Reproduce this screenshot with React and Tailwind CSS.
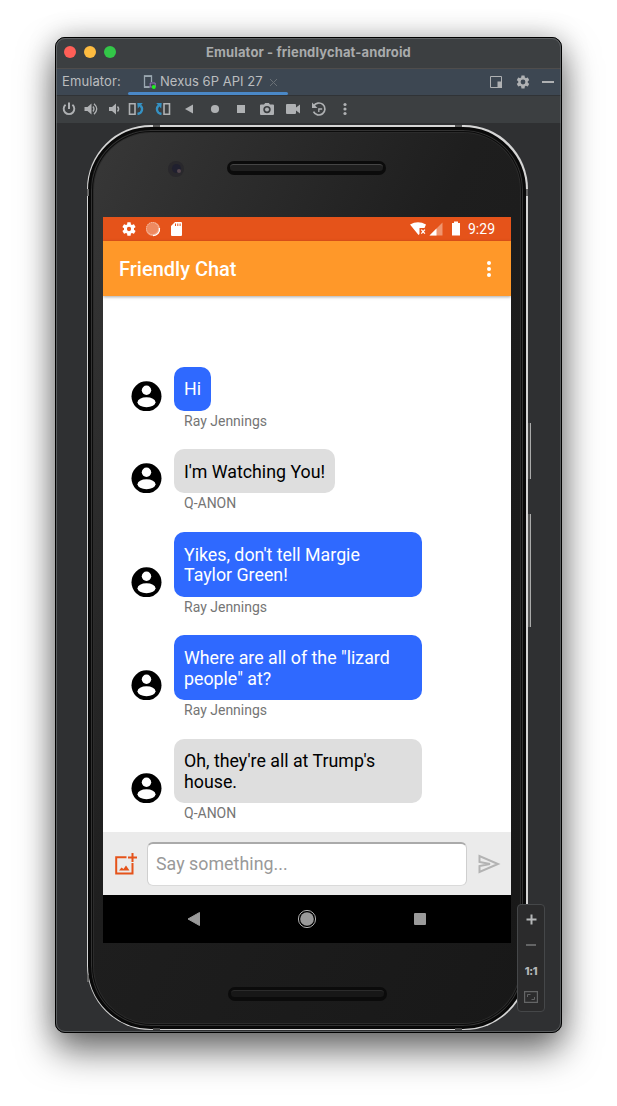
import React from 'react';

const ICON = '#afb1b3';

function Tool({ wide, className = '', children }) {
  return (
    <button className={`flex h-[26px] shrink-0 items-center justify-center ${wide ? 'w-[26px]' : 'w-[22.5px]'} ${className}`}>
      <svg width="16" height="16" viewBox="0 0 16 16" fill={ICON}>{children}</svg>
    </button>
  );
}

function TitleBar() {
  return (
    <div className="relative flex h-[30px] shrink-0 items-center justify-center bg-[#3c3f41] pb-[3px]">
      <div className="absolute left-[8px] top-[8px] flex gap-[8px]">
        <span className="size-[12px] rounded-full bg-[#ff5f57]" />
        <span className="size-[12px] rounded-full bg-[#febc40]" />
        <span className="size-[12px] rounded-full bg-[#33c748]" />
      </div>
      <span className="font-['Inter',sans-serif] text-[13px] leading-[16px] font-bold tracking-[0.13px] whitespace-nowrap text-[#a9abac]">
        Emulator - friendlychat-android
      </span>
    </div>
  );
}

function TabBar() {
  return (
    <div className="flex h-[28px] shrink-0 border-y border-t-[#4f4d4c] border-b-[#303336] bg-[#3d4752] font-['Inter',sans-serif] text-[13px] text-[#bbbdbf]">
      <span className="flex w-[72px] items-center pl-[6px] tracking-[0.1px]">Emulator:</span>
      <div className="relative flex w-[160px] items-center">
        <svg className="ml-[14px] shrink-0" width="16" height="16" viewBox="0 0 16 16" fill="none">
          <path d="M7.500 13H2.500V2h7v6" stroke="#9aa7b0" strokeWidth="1.300" />
          <path d="M2 12.200h5.500v1.800H2zM2 1.500h8V3H2z" fill="#9aa7b0" />
          <path d="M8.200 9h5v4h-5z" stroke="#9a6fc0" />
          <circle cx="11.800" cy="13" r="2" fill="#1ef21e" />
        </svg>
        <span className="ml-[2px] tracking-[0.03px] whitespace-nowrap">Nexus 6P API 27</span>
        <svg className="ml-[6px]" width="9" height="9" viewBox="0 0 9 9">
          <path d="M1 1l7 7M8 1L1 8" stroke="#6a7076" strokeWidth="1" />
        </svg>
        <div className="absolute bottom-0 left-0 h-[3px] w-[160px] rounded-full bg-[#4a88c7]" />
      </div>
      <div className="ml-auto flex items-center pr-[4px]">
        <svg className="mr-[12px]" width="14" height="14" viewBox="0 0 14 14">
          <path d="M1.500 1.500h11v11h-11z" fill="none" stroke={ICON} />
          <path d="M8.500 6.500H13V13H8.500z" fill={ICON} />
        </svg>
        <svg className="mr-[11px]" width="16" height="16" viewBox="0 0 24 24" fill={ICON}>
          <path d="M19.140 12.940c.04-.3.060-.61.060-.94s-.02-.64-.07-.94l2.030-1.580c.18-.14.230-.41.120-.61l-1.920-3.320c-.12-.22-.37-.29-.59-.22l-2.390.96c-.5-.38-1.030-.7-1.620-.94l-.36-2.540c-.04-.24-.24-.41-.48-.41h-3.840c-.24 0-.43.170-.47.410l-.36 2.540c-.59.240-1.130.570-1.620.940l-2.390-.96c-.22-.08-.47 0-.59.220L2.740 8.870c-.12.210-.08.470.120.610l2.030 1.580c-.05.3-.09.630-.09.940s.020.640.070.940l-2.030 1.580c-.18.140-.23.410-.12.610l1.920 3.320c.12.220.37.290.59.220l2.390-.96c.5.380 1.030.7 1.620.940l.36 2.540c.05.240.24.410.48.410h3.840c.24 0 .44-.17.470-.41l.36-2.540c.59-.24 1.130-.56 1.620-.94l2.390.960c.22.080.47 0 .59-.22l1.920-3.320c.12-.22.070-.47-.12-.61l-2.010-1.580zM12 15.600a3.600 3.600 0 110-7.200 3.600 3.600 0 010 7.200z" />
        </svg>
        <span className="mr-[3px] h-[2px] w-[12px] bg-[#afb1b3]" />
      </div>
    </div>
  );
}

function ToolBar() {
  return (
    <div className="flex h-[27px] shrink-0 bg-[#3c3f41] pl-[1.500px]">
      <Tool>
        <path d="M4.600 3.800A5.300 5.300 0 1011.400 3.800" fill="none" stroke={ICON} strokeWidth="1.900" />
        <path d="M7 1.500h2V8H7z" />
      </Tool>
      <Tool>
        <path d="M1.500 6h3L8.500 2.500v11L4.500 10h-3z" />
        <path d="M10 5.500Q12 8 10 10.500M11 2.800Q16.500 8 11 13.200" fill="none" stroke={ICON} strokeWidth="1.300" />
      </Tool>
      <Tool>
        <path d="M3 6h3l4-3.500v11L6 10H3z" />
        <path d="M11.500 5.500Q13.800 8 11.500 10.500" fill="none" stroke={ICON} strokeWidth="1.400" />
      </Tool>
      <Tool>
        <path d="M1.500 2.700h5.500v10.600h-5.500z" fill="none" stroke={ICON} strokeWidth="1.600" />
        <path d="M9.500 13C15 12 15 6.500 12.200 4.500" fill="none" stroke="#3592c4" strokeWidth="2.300" />
        <path d="M9.300 2h5.500L9.800 7.500z" fill="#3592c4" />
      </Tool>
      <Tool wide className="ml-[2px]">
        <path d="M9 2.700h5.500v10.600H9z" fill="none" stroke={ICON} strokeWidth="1.600" />
        <path d="M6.500 13C1 12 1 6.500 3.800 4.500" fill="none" stroke="#3592c4" strokeWidth="2.300" />
        <path d="M6.700 2H1.200L6.200 7.500z" fill="#3592c4" />
      </Tool>
      <Tool wide><path d="M4 8l8-4.500v9z" /></Tool>
      <Tool wide><circle cx="8" cy="8" r="4.100" /></Tool>
      <Tool wide><path d="M4 4h8v8H4z" /></Tool>
      <Tool wide>
        <path fillRule="evenodd" d="M2 3.500h3L6.200 2h3.600L11 3.500h3q1 0 1 1V13q0 1-1 1H2q-1 0-1-1V4.500q0-1 1-1zM8 4.900a3.700 3.700 0 100 7.400 3.700 3.700 0 000-7.400z" />
        <circle cx="8" cy="8.600" r="2" />
      </Tool>
      <Tool wide><path d="M1 4q0-1 1-1h8q1 0 1 1v2.500L15 3.500v9L11 9.500V12q0 1-1 1H2q-1 0-1-1z" /></Tool>
      <Tool wide>
        <path d="M2.700 5A6 6 0 112.500 10.600" fill="none" stroke={ICON} strokeWidth="1.700" />
        <path d="M1 1.500V7h5.500z" />
        <path d="M7.800 11V8h3.400" fill="none" stroke={ICON} strokeWidth="1.300" />
      </Tool>
      <Tool wide>
        <circle cx="8" cy="3.500" r="1.600" /><circle cx="8" cy="8" r="1.600" /><circle cx="8" cy="12.500" r="1.600" />
      </Tool>
    </div>
  );
}

function StatusBar() {
  return (
    <div className="flex h-[24px] items-center bg-[#e5531a] pr-[16px] pl-[18px]">
      <svg width="16" height="16" viewBox="0 0 24 24" fill="#fff">
        <path fillRule="evenodd" d="M19.430 12.980c.04-.32.070-.64.070-.98s-.03-.66-.07-.98l2.110-1.650c.19-.15.240-.42.120-.64l-2-3.460c-.12-.22-.39-.3-.61-.22l-2.490 1c-.52-.4-1.080-.73-1.690-.98l-.38-2.650A.488.488 0 0014 2h-4c-.25 0-.46.180-.49.420l-.38 2.650c-.61.250-1.170.590-1.690.980l-2.490-1c-.23-.09-.49 0-.61.220l-2 3.460c-.13.220-.07.490.12.640l2.110 1.650c-.04.320-.07.650-.07.980s.030.660.070.980l-2.110 1.650c-.19.150-.24.420-.12.640l2 3.460c.12.220.39.300.61.220l2.490-1c.52.400 1.080.730 1.690.980l.38 2.650c.03.240.24.420.49.420h4c.25 0 .46-.18.490-.42l.38-2.650c.61-.25 1.170-.59 1.690-.98l2.490 1c.23.090.49 0 .61-.22l2-3.460c.12-.22.070-.49-.12-.64l-2.110-1.650zM12 15.200a3.200 3.200 0 110-6.400 3.200 3.200 0 010 6.400z" />
      </svg>
      <svg className="ml-[8px]" width="16" height="16" viewBox="0 0 16 16">
        <circle cx="8" cy="8" r="7" fill="#f3a483" />
        <circle cx="7.500" cy="7.500" r="6" fill="#ee8a60" stroke="#f7c0a8" strokeWidth="1" strokeDasharray="1 1" />
        <path d="M14.500 7A6.500 6.500 0 018 14.600" fill="none" stroke="#fff" strokeWidth="1.200" />
      </svg>
      <svg className="ml-[9px]" width="13" height="16" viewBox="0 0 13 16">
        <path fill="#fff" fillRule="evenodd" d="M5 1h6q1 0 1 1v12q0 1-1 1H2q-1 0-1-1V5zM5 2.500V5h1V2.500zM7.300 2.500V5h1V2.500zM9.600 2.500V5h1V2.500z" />
      </svg>
      <svg className="ml-auto" width="35" height="16" viewBox="0 0 35 16">
        <path d="M1 3.500Q9 -1 17 3.500L15.500 7H10.500v6L9.500 14z" fill="#fff" />
        <path d="M12.300 8.600l3.600 4M15.900 8.600l-3.600 4" stroke="#fff" strokeWidth="1.300" />
        <path d="M33.500 1.500v13h-13z" fill="#f0956f" />
        <path d="M27.500 7.500v7h-7z" fill="#fff" />
      </svg>
      <svg className="ml-[7px]" width="10" height="16" viewBox="0 0 10 16">
        <path d="M3 .5h4V2h2v12.500H1V2h2z" fill="#fff" />
      </svg>
      <span className="ml-[7px] w-[27px] text-[14px] leading-[24px] text-white">9:29</span>
    </div>
  );
}

function AppBar() {
  return (
    <div className="relative flex h-[55px] items-center justify-between bg-[#ff9829] pr-[19px] pl-[16px] shadow-[0_1px_3px_rgba(0,0,0,0.35)]">
      <h1 className="text-[20px] font-medium text-white">Friendly Chat</h1>
      <svg width="6" height="18" viewBox="0 0 6 18" fill="#fff">
        <circle cx="3" cy="3" r="2" /><circle cx="3" cy="9" r="2" /><circle cx="3" cy="15" r="2" />
      </svg>
    </div>
  );
}

const messages = [
  { lines: ['Hi'], name: 'Ray Jennings', own: true },
  { lines: ["I'm Watching You!"], name: 'Q-ANON' },
  { lines: ["Yikes, don't tell Margie", 'Taylor Green!'], name: 'Ray Jennings', own: true },
  { lines: ['Where are all of the "lizard', 'people" at?'], name: 'Ray Jennings', own: true },
  { lines: ["Oh, they're all at Trump's", 'house.'], name: 'Q-ANON' },
];

function Message({ lines, name, own }) {
  return (
    <li>
      <div className="flex items-end">
        <svg className="mr-[12px] shrink-0" width="31" height="31" viewBox="0 0 31 31">
          <circle cx="15.500" cy="16.300" r="15" fill="#000" />
          <circle cx="15.500" cy="10.300" r="4.700" fill="#fff" />
          <ellipse cx="15.500" cy="22.300" rx="9" ry="5" fill="#fff" />
        </svg>
        <div className={`rounded-[10px] px-[10px] pt-[12.700px] pb-[10.700px] text-[17.800px] leading-[20.700px] whitespace-nowrap ${own ? 'bg-[#2f69ff] text-white' : 'bg-[#dedede] text-black'} ${lines.length > 1 ? 'w-[248px]' : ''}`}>
          {lines.map((line) => <div key={line}>{line}</div>)}
        </div>
      </div>
      <div className="ml-[53px] h-[20px] text-[14px] leading-[20px] text-[#757575]">{name}</div>
    </li>
  );
}

function Composer() {
  return (
    <div className="flex h-[63px] items-center bg-[#ebebeb] pl-[11px]">
      <svg className="shrink-0" width="23" height="24" viewBox="0 0 23 24">
        <path d="M12.500 5.200H2.200V21.500H18.500V11" fill="none" stroke="#e5531a" strokeWidth="2" />
        <path d="M17.500 1h2v3.500H23v2h-3.500V10h-2V6.500H14v-2h3.500z" fill="#e5531a" />
        <path d="M5 18.500l2.500-3 2 1.500 2.500-3.500 3.500 5z" fill="#e5531a" />
      </svg>
      <div className="ml-[10px] flex h-[44px] w-[320px] items-center rounded-[6px] border border-t-2 border-[#cfcfcf] border-t-[#aaa] border-b-[#dadada] bg-white pl-[8px] text-[17.800px] tracking-[0.04px] text-[#999]">
        Say something...
      </div>
      <svg className="ml-[11px]" width="23" height="20" viewBox="0 0 23 20">
        <path d="M1.500 2v6L12 10 1.500 12v6L20 10z" fill="none" stroke="#b3b3b3" strokeWidth="2" />
      </svg>
    </div>
  );
}

function NavBar() {
  return (
    <div className="flex h-[48px] items-center bg-black pl-[82px]">
      <svg width="18" height="18" viewBox="0 0 18 18"><path d="M3 9L14.500 2.500v13z" fill="#9a9a9a" stroke="#9a9a9a" /></svg>
      <svg className="ml-[94px]" width="20" height="20" viewBox="0 0 20 20">
        <circle cx="10" cy="10" r="6.800" fill="#9a9a9a" /><circle cx="10" cy="10" r="8.600" fill="none" stroke="#b0b0b0" strokeWidth="1" />
      </svg>
      <span className="ml-[97px] size-[12px] rounded-[1px] bg-[#9a9a9a]" />
    </div>
  );
}

function Screen() {
  return (
    <div className="flex h-[726px] w-[408px] flex-col overflow-hidden bg-white font-['Roboto',sans-serif]">
      <StatusBar />
      <AppBar />
      <ul className="flex h-[536px] flex-col gap-[18.500px] pt-[70.800px] pl-[28px]">
        {messages.map((m, i) => <Message key={i} {...m} />)}
      </ul>
      <Composer />
      <NavBar />
    </div>
  );
}

function Speaker({ className, dim }) {
  return (
    <div className={`h-[14px] w-[159px] rounded-full bg-[#0b0b0b] p-[3px] ${className}`}>
      <div className={`h-[7px] rounded-full border-t ${dim ? 'border-[#2b2b2b] bg-[#171717]' : 'border-[#454545] bg-[#1f1f1f]'}`} />
    </div>
  );
}

function Phone() {
  return (
    <div className="relative ml-[30.500px] mt-[1px] h-[905px] w-[441px] rounded-[64px] bg-[#d5d5d5] p-[1.500px]">
      <div className="flex h-full flex-col items-center rounded-[63px] border-[3px] border-[#090909] bg-linear-to-br from-[#383838] via-[#1e1e1e] via-45% to-[#181818] shadow-[inset_0_0_0_1px_#333,inset_0_0_0_2px_#0c0c0c,inset_0_0_0_3px_#2b2b2b]">
        <div className="flex h-[87.500px] w-[408px] items-start pt-[31px]">
          <span className="ml-[65px] flex size-[16px] items-center justify-center rounded-full bg-[#29282c]">
            <span className="flex size-[9px] items-end justify-end rounded-full bg-[#20202f]">
              <span className="size-[4px] rounded-full bg-[#55464f]" />
            </span>
          </span>
          <Speaker className="ml-[43px]" />
        </div>
        <Screen />
        <Speaker dim className="mt-[43.500px]" />
      </div>
      <span className="absolute top-[298px] left-[441px] h-[56px] w-[3px] border-r border-[#aaa] bg-[#444]" />
      <span className="absolute top-[389px] left-[441px] h-[113px] w-[3px] border-r border-[#aaa] bg-[#555]" />
      <span className="absolute top-0 left-[66px] h-[2px] w-[7px] bg-[#555]" />
      <span className="absolute top-0 left-[368px] h-[2px] w-[7px] bg-[#555]" />
      <span className="absolute bottom-0 left-[66px] h-[2px] w-[7px] bg-[#444]" />
      <span className="absolute bottom-0 left-[368px] h-[2px] w-[7px] bg-[#444]" />
      <span className="absolute top-[64px] left-0 h-[7px] w-[2px] bg-[#666]" />
      <span className="absolute top-[64px] right-0 h-[7px] w-[2px] bg-[#666]" />
      <span className="absolute bottom-[48px] left-0 h-[7px] w-[2px] bg-[#666]" />
    </div>
  );
}

function ZoomControls() {
  return (
    <div className="absolute top-[867px] left-[462px] flex h-[108px] w-[28px] flex-col items-center rounded-[4px] border border-[#454749] bg-[#2b2b2c]">
      <svg className="mt-[9px]" width="11" height="11" viewBox="0 0 11 11"><path d="M5.500 .5v10M.5 5.500h10" stroke="#b5b7b8" strokeWidth="2" /></svg>
      <span className="mt-[19px] h-[2px] w-[10px] bg-[#636465]" />
      <span className="mt-[19px] flex h-[12px] items-center font-['Inter',sans-serif] text-[11px] leading-[12px] font-extrabold tracking-[-0.3px] text-[#b5b7b8]">1:1</span>
      <svg className="mt-[14px]" width="14" height="12" viewBox="0 0 14 12" fill="none" stroke="#646566">
        <path d="M.6 .6h12.800v10.800H.6z" strokeWidth="1.200" /><path d="M3.500 6V3.500h3M10.500 6v2.500h-3" />
      </svg>
    </div>
  );
}

export default function App() {
  return (
    <main className="h-[1106px] w-[617px] overflow-hidden bg-white pt-[37px] pl-[55px]">
      <div className="relative h-[996px] w-[507px] rounded-[10px] bg-[#2f3032] shadow-[0_18px_36px_rgba(0,0,0,0.55),0_0_28px_rgba(0,0,0,0.22)]">
        <div className="flex h-full flex-col overflow-hidden rounded-[10px] border border-black">
          <TitleBar />
          <TabBar />
          <ToolBar />
          <div className="h-[1px] shrink-0" />
          <Phone />
        </div>
        <div className="pointer-events-none absolute inset-[1px] rounded-[9px] border border-[#77797b]/60" />
        <ZoomControls />
      </div>
    </main>
  );
}
